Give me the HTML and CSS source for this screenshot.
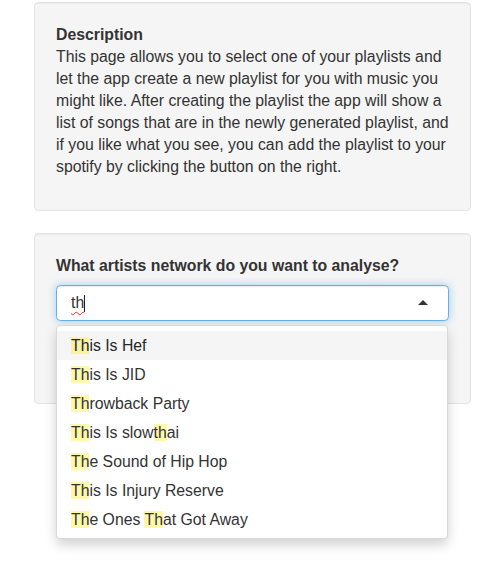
FILE: index.html
```html
<!DOCTYPE html>
<html>
<head>
<meta charset="utf-8">
<link rel="stylesheet" href="styles.css">
</head>
<body>
<div class="page">
  <div class="well">
    <p class="desc"><strong>Description</strong><br>This page allows you to select one of your playlists and let the app create a new playlist for you with music you might like. After creating the playlist the app will show a list of songs that are in the newly generated playlist, and if you like what you see, you can add the playlist to your spotify by clicking the button on the right.</p>
  </div>
  <div class="well well-form">
    <div class="form-group">
      <label class="control-label">What artists network do you want to analyse?</label>
      <div class="selectize">
        <div class="selectize-input">
          <span class="typed">th</span><span class="cursor"></span>
          <span class="arrow"></span>
        </div>
        <div class="selectize-dropdown">
          <div class="option active"><span class="hl">Th</span>is Is Hef</div>
          <div class="option"><span class="hl">Th</span>is Is JID</div>
          <div class="option"><span class="hl">Th</span>rowback Party</div>
          <div class="option"><span class="hl">Th</span>is Is slow<span class="hl">th</span>ai</div>
          <div class="option"><span class="hl">Th</span>e Sound of Hip Hop</div>
          <div class="option"><span class="hl">Th</span>is Is Injury Reserve</div>
          <div class="option"><span class="hl">Th</span>e Ones <span class="hl">Th</span>at Got Away</div>
        </div>
      </div>
    </div>
  </div>
</div>
</body>
</html>
```
FILE: styles.css
```css
* { box-sizing: border-box; }
html, body { margin: 0; padding: 0; background: #fff; }
html { min-height: 579px; }
body {
  min-height: 579px;
  font-family: "Liberation Sans", Arial, Helvetica, sans-serif;
  font-size: 15.8px;
  line-height: 22px;
  color: #333;
}
.page {
  padding: 2px 30px 0 34px;
  min-height: 579px;
}
.well {
  background: #f5f5f5;
  border: 1px solid #e3e3e3;
  border-radius: 4.4px;
  box-shadow: inset 0 1px 1px rgba(0,0,0,.05);
  padding: 21px;
  margin-bottom: 22px;
}
.desc { margin: 0 0 11px 0; }
.desc strong { font-weight: bold; }
.well-form { padding-bottom: 21px; }
.form-group { margin-bottom: 61px; }
.control-label {
  display: block;
  font-weight: bold;
  margin-bottom: 8px;
}
.selectize { position: relative; }
.selectize-input {
  position: relative;
  height: 36px;
  border: 1px solid #66afe9;
  border-radius: 4.4px;
  background: #fff;
  padding: 6px 13px 6px 14px;
  box-shadow: inset 0 1px 1px rgba(0,0,0,.075), 0 0 8px rgba(102,175,233,.6);
  display: flex;
  align-items: center;
}
.typed {
  color: #333;
  text-decoration: underline wavy #e0302a;
  text-decoration-thickness: 1px;
  text-underline-offset: 3px;
}
.cursor {
  display: inline-block;
  width: 1px;
  height: 17px;
  background: #222;
}
.arrow {
  position: absolute;
  right: 20px;
  top: 14px;
  width: 0;
  height: 0;
  border-left: 5.5px solid transparent;
  border-right: 5.5px solid transparent;
  border-bottom: 5.5px solid #333;
}
.selectize-dropdown {
  position: absolute;
  left: 0;
  right: 1px;
  top: 40px;
  background: #fff;
  border: 1px solid rgba(0,0,0,.15);
  border-radius: 4.4px;
  box-shadow: 0 6px 12px rgba(0,0,0,.175);
  padding: 5px 0 4px 0;
  z-index: 10;
}
.option {
  height: 29px;
  line-height: 29px;
  padding: 0 14px;
  color: #333;
}
.option.active { background: #f5f5f5; color: #262626; }
.hl { background: rgba(255,237,40,.4); }
```
